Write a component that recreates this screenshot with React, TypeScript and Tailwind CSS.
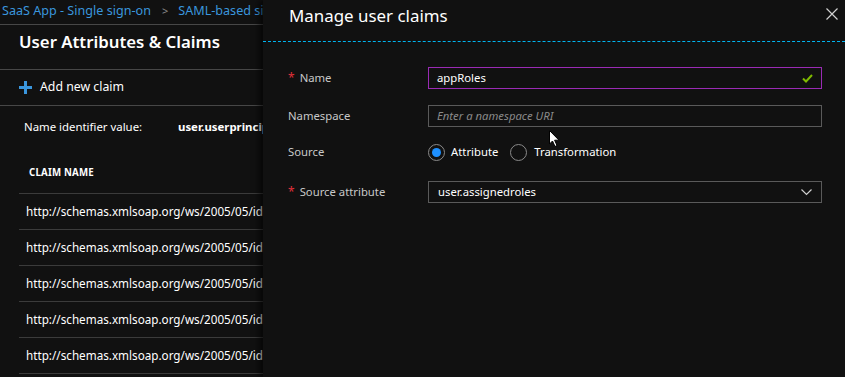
import React from "react";

const font = { fontFamily: '"Noto Sans", "Open Sans", Arial, sans-serif' };

function Row({ text }: { text: string }) {
  return (
    <div className="ml-[19px] h-[36px] border-b border-[#3b3b3b] flex items-center pl-[7px] text-[11.7px] text-white whitespace-nowrap overflow-hidden">
      {text}
    </div>
  );
}

export default function App() {
  const url = "http://schemas.xmlsoap.org/ws/2005/05/identity/claims/givenname";
  return (
    <div className="w-[845px] h-[377px] bg-[#111111] flex overflow-hidden relative" style={font}>
      {/* Left panel */}
      <div className="w-[263px] shrink-0 overflow-hidden bg-[#111111]">
        <div className="h-[25px] border-b border-[#474747] flex items-center pl-[2px] pb-[1px] text-[12.6px] text-[#3a96dd] whitespace-nowrap overflow-hidden">
          <span>SaaS App - Single sign-on</span>
          <span className="ml-[11px] mr-[10px] text-[#8a8a8a] text-[11px]">&gt;</span>
          <span>SAML-based sign-on</span>
        </div>
        <div className="h-[45px] border-b border-[#474747] pl-[19px] pt-[4px] text-[16.8px] font-semibold text-white whitespace-nowrap">
          User Attributes &amp; Claims
        </div>
        <div className="h-[36px] border-b border-[#474747] flex items-center pl-[19px] text-[12.3px] text-white whitespace-nowrap">
          <svg width="13" height="13" viewBox="0 0 13 13" className="mr-[8px]">
            <rect x="5" y="0" width="3" height="13" fill="#3a96dd" />
            <rect x="0" y="5" width="13" height="3" fill="#3a96dd" />
          </svg>
          Add new claim
        </div>
        <div className="h-[42px] flex items-center pl-[24px] text-[11.4px] text-white whitespace-nowrap overflow-hidden">
          <span className="w-[154px] shrink-0">Name identifier value:</span>
          <span className="font-bold">user.userprincipalname</span>
        </div>
        <div className="h-[46px] ml-[19px] border-b border-[#3b3b3b] flex items-center pl-[10px] pt-[5px] text-[9.7px] font-bold text-white tracking-[0.2px]">
          CLAIM NAME
        </div>
        <Row text={url} />
        <Row text={url} />
        <Row text={url} />
        <Row text={url} />
        <Row text={url} />
      </div>

      {/* Right panel */}
      <div className="flex-1 bg-[#111111] relative shadow-[-4px_0_6px_rgba(0,0,0,0.6)]">
        <div className="h-[42px] relative flex items-start pl-[26px] pt-[3px] border-b border-dashed border-[#00b4f0]">
          <span className="text-[16.9px] text-white whitespace-nowrap">Manage user claims</span>
          <svg width="12" height="12" viewBox="0 0 12 12" className="absolute right-[7px] top-[8px]">
            <path d="M0.5 0.5 L11.5 11.5 M11.5 0.5 L0.5 11.5" stroke="#d0d0d0" strokeWidth="1.2" />
          </svg>
        </div>

        <div className="pl-[25px] pr-[23px] pt-[25px] text-[11.3px]">
          {/* Name */}
          <div className="flex items-center h-[22px]">
            <div className="w-[140px] flex items-center text-[#c8c8c8]">
              <span className="text-[#e0303a] mr-[5px] text-[12px]">*</span>
              <span>Name</span>
            </div>
            <div className="flex-1 h-[22px] border border-[#9a2bb5] flex items-center px-[8px] text-white">
              <span className="flex-1">appRoles</span>
              <svg width="11" height="9" viewBox="0 0 11 9">
                <path d="M1 4.5 L4 7.5 L10 1" stroke="#7fba00" strokeWidth="2" fill="none" />
              </svg>
            </div>
          </div>
          {/* Namespace */}
          <div className="flex items-center h-[22px] mt-[16px]">
            <div className="w-[140px] text-[#c8c8c8]">Namespace</div>
            <div className="flex-1 h-[22px] border border-[#5a5a5a] flex items-center px-[8px] text-[#8a8a8a] italic">
              Enter a namespace URI
            </div>
          </div>
          {/* Source */}
          <div className="flex items-center h-[22px] mt-[14px]">
            <div className="w-[140px] text-[#c8c8c8]">Source</div>
            <div className="flex items-center text-white">
              <span className="w-[17px] h-[17px] rounded-full border border-[#8a8a8a] flex items-center justify-center">
                <span className="w-[9px] h-[9px] rounded-full bg-[#1e90ff]" />
              </span>
              <span className="ml-[6px]">Attribute</span>
              <span className="ml-[12px] w-[17px] h-[17px] rounded-full border border-[#8a8a8a]" />
              <span className="ml-[7px]">Transformation</span>
            </div>
          </div>
          {/* Source attribute */}
          <div className="flex items-center h-[22px] mt-[18px]">
            <div className="w-[140px] flex items-center text-[#c8c8c8]">
              <span className="text-[#e0303a] mr-[5px] text-[12px]">*</span>
              <span>Source attribute</span>
            </div>
            <div className="flex-1 h-[22px] border border-[#5a5a5a] flex items-center px-[9px] text-white">
              <span className="flex-1">user.assignedroles</span>
              <svg width="11" height="7" viewBox="0 0 11 7">
                <path d="M0.5 0.5 L5.5 5.5 L10.5 0.5" stroke="#d0d0d0" strokeWidth="1.2" fill="none" />
              </svg>
            </div>
          </div>
        </div>

        {/* mouse cursor */}
        <svg width="12" height="18" viewBox="0 0 12 18" className="absolute left-[286px] top-[130px]">
          <path d="M0.5 0.5 L0.5 14 L3.5 11 L6 16.5 L8 15.5 L5.6 10.2 L10 10.2 Z" fill="#ffffff" stroke="#000" strokeWidth="1" />
        </svg>
      </div>
    </div>
  );
}
